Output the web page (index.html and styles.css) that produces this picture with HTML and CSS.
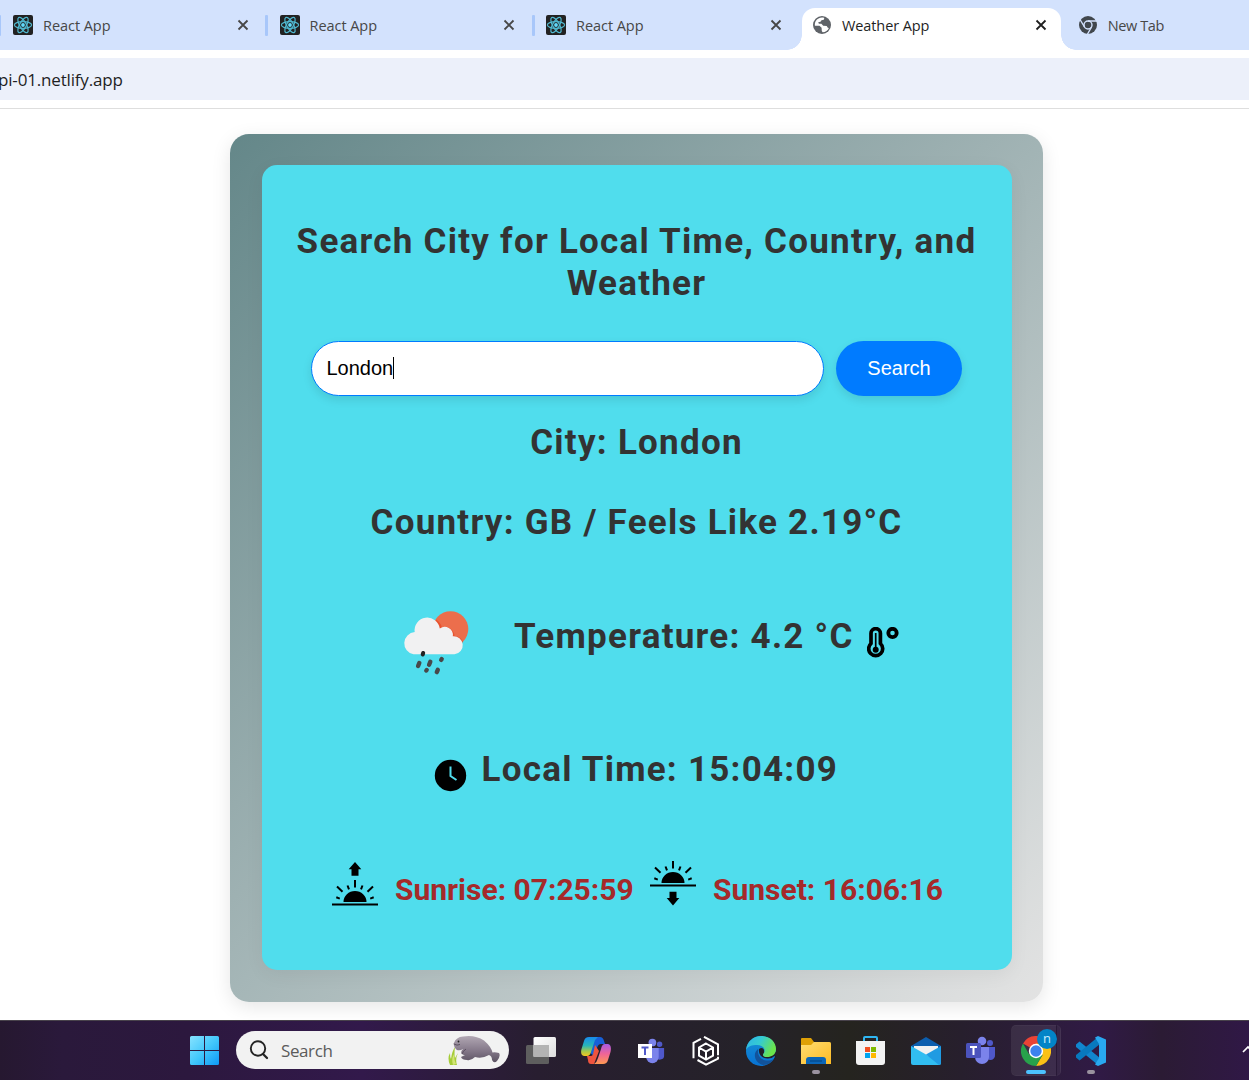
FILE: index.html
```html
<!DOCTYPE html>
<html lang="en">
<head>
<meta charset="utf-8">
<title>Weather App</title>
<link rel="stylesheet" href="styles.css">
</head>
<body>
<svg class="defs" width="0" height="0">
  <defs>
    <symbol id="react" viewBox="0 0 20 20">
      <rect width="20" height="20" rx="2" fill="#222222"/>
      <g fill="none" stroke="#50b9d0" stroke-width="1.2">
        <ellipse cx="10" cy="10" rx="8.6" ry="3.3"/>
        <ellipse cx="10" cy="10" rx="8.6" ry="3.3" transform="rotate(60 10 10)"/>
        <ellipse cx="10" cy="10" rx="8.6" ry="3.3" transform="rotate(120 10 10)"/>
      </g>
      <circle cx="10" cy="10" r="1.9" fill="#61dafb"/>
    </symbol>
    <symbol id="close" viewBox="0 0 12 12"><path d="M1.5 1.500l9 9M10.500 1.500l-9 9" stroke="currentColor" stroke-width="1.8"/></symbol>
    <symbol id="people" viewBox="0 0 30 30">
      <circle cx="24" cy="7" r="3" fill="#5059c9"/><path d="M20 11h9v8a4.500 4.500 0 0 1-9 1z" fill="#4f58ca"/>
      <circle cx="16" cy="5" r="4.300" fill="#7b83eb"/><path d="M9 11h14v10a7 7 0 0 1-14 0z" fill="#7b83eb"/>
    </symbol>
  </defs>
</svg>

<header class="tabs">
  <div class="tab"><svg class="favicon"><use href="#react"/></svg><span class="tab-title">React App</span><svg class="close"><use href="#close"/></svg></div>
  <div class="tab"><svg class="favicon"><use href="#react"/></svg><span class="tab-title">React App</span><svg class="close"><use href="#close"/></svg></div>
  <div class="tab"><svg class="favicon"><use href="#react"/></svg><span class="tab-title">React App</span><svg class="close"><use href="#close"/></svg></div>
  <div class="tab tab-active">
    <svg class="favicon" viewBox="0 0 20 20"><circle cx="10" cy="10" r="9" fill="#5f6368"/><path d="M12.300 2.900C9.500 1.800 5.500 3 3.800 6.100 3 7.600 2.700 9 2.900 10.700l4.600.1 2.100 1.900.2 3.200.8 1.300c3 0 5.300-1.800 6.300-4.300l-1.100-.1-1.100-1.800-3.500-.2-1.800-2.100H6.900L6.200 7.300l2.300-.6 1-1.500 2.300-.5z" fill="#fff"/></svg>
    <span class="tab-title title-weather">Weather App</span><svg class="close"><use href="#close"/></svg>
  </div>
  <div class="tab tab-new">
    <svg class="favicon" viewBox="0 0 20 20"><circle cx="10" cy="10" r="9" fill="#41474d"/><circle cx="10" cy="10" r="4" fill="none" stroke="#d3e2fd" stroke-width="1.400"/><path d="M10 6h9M6.500 12L2 4.500M13.500 12L9 20" stroke="#d3e2fd" stroke-width="1.400"/></svg>
    <span class="tab-title title-new">New Tab</span>
  </div>
</header>
<div class="toolbar"><div class="address">pi-01.netlify.app</div></div>

<main class="page">
  <section class="frame">
    <div class="panel">
      <h1 class="heading title">Search City for Local Time, Country, and<br>Weather</h1>
      <div class="search">
        <div class="city-input">London<span class="caret"></span></div>
        <button class="search-button">Search</button>
      </div>
      <h2 class="heading city">City: London</h2>
      <h2 class="heading country">Country: GB / Feels Like 2.19°C</h2>
      <div class="row temperature">
        <svg class="weather" viewBox="0 0 70 66">
          <circle cx="48.500" cy="19" r="17.800" fill="#ec6e4c"/>
          <path d="M34 9.500a13.500 13.500 0 0 1 6 8 9.500 9.500 0 0 1 12.500 8.500 10 10 0 0 1 8.500 6l-3 2-24-8z" fill="#e8532f"/>
          <path d="M11.500 44.300a11.200 11.200 0 0 1 1.200-22.200A12.300 12.300 0 0 1 37.800 18.500a8.200 8.200 0 0 1 13 7.700A9 9 0 1 1 52.500 44.300z" fill="#f1f1f2"/>
          <path d="M17.300 53l-1.200 3M28.300 51.700l-1.200 3M39.700 49.100l-.5.800M24.700 60l-.4.500M35.800 59.800l-1 2.300" stroke="#48484a" stroke-width="4.400" stroke-linecap="round"/>
          <path d="M21.200 43l-.5 1.500" stroke="#222" stroke-width="4" stroke-linecap="round"/>
        </svg>
        <h2 class="heading temp-text">Temperature: 4.2 °C</h2>
        <svg class="thermo" viewBox="0 0 32 32"><path d="M4 6.300a4.700 4.700 0 0 1 9.400 0v10.200a7 7 0 1 1-9.400 0z" fill="none" stroke="#000" stroke-width="3.700"/><path d="M8.700 6v17" stroke="#000" stroke-width="1.700"/><circle cx="8.700" cy="22.800" r="3" /><circle cx="25.500" cy="6" r="4.200" fill="none" stroke="#000" stroke-width="3.800"/></svg>
      </div>
      <div class="row time">
        <svg class="clock" viewBox="0 0 32 32"><circle cx="15.500" cy="15.500" r="15.700"/><path d="M15.500 6.500V16l6 4" fill="none" stroke="#50dded" stroke-width="2"/></svg>
        <h2 class="heading time-text">Local Time: 15:04:09</h2>
      </div>
      <div class="row sun">
        <svg class="sun-icon" viewBox="0 0 46 46"><path d="M23 0l6.300 7.300h-2.800v6.400h-7V7.300h-2.800zM11.500 40a11.500 11 0 0 1 23 0z"/><path d="M0 42.500h46M23 18v7.500M15.500 23.500l1.500 3.800M30.500 23.500L29 27.300M5 24.500l5.500 5.300M41 24.500l-5.500 5.300M4.300 35.300l3.500 1.300M41.700 35.300l-3.500 1.300" stroke="#000" stroke-width="2"/></svg>
        <strong class="sunrise-text">Sunrise: 07:25:59</strong>
        <svg class="sun-icon sunset-icon" viewBox="0 0 46 46"><path d="M23 44.500l6.300-7.500h-2.800v-6.300h-7V37h-2.800zM11.500 22a11.500 11 0 0 1 23 0z"/><path d="M0 24.500h46M23 0v7.500M15.500 5.500L17 9.300M30.500 5.500L29 9.300M5 6.500l5.500 5.300M41 6.500l-5.500 5.300M4.300 17.300l3.500 1.300M41.700 17.300l-3.500 1.300" stroke="#000" stroke-width="2"/></svg>
        <strong class="sunset-text">Sunset: 16:06:16</strong>
      </div>
    </div>
  </section>
</main>

<footer class="taskbar">
  <svg class="start" viewBox="0 0 30 30"><defs><linearGradient id="win" x2="1" y2="1" gradientUnits="userSpaceOnUse" x1="0" y1="0" gradientTransform="scale(30)"><stop stop-color="#87e3ff"/><stop offset=".5" stop-color="#42c7fb"/><stop offset="1" stop-color="#0a95f4"/></linearGradient></defs><path fill="url(#win)" d="M1.500 0H14v14H0V1.500Q0 0 1.500 0zM15 0h12.500Q29 0 29 1.500V14H15zM0 15h14v14H1.500Q0 29 0 27.500zM15 15h14v12.500q0 1.500-1.500 1.500H15z"/></svg>
  <div class="task-search">
    <svg class="lens" viewBox="0 0 20 20"><circle cx="9" cy="8.500" r="7.200" fill="none" stroke="#242424" stroke-width="1.900"/><path d="M14 14l4 4" stroke="#242424" stroke-width="2.300" stroke-linecap="round"/></svg>
    <span class="task-search-text">Search</span>
    <svg class="manatee" viewBox="0 0 52 32">
      <defs><linearGradient id="skin" x2="0" y2="1"><stop stop-color="#b1a7b3"/><stop offset=".55" stop-color="#85798a"/><stop offset="1" stop-color="#5c5363"/></linearGradient></defs>
      <path d="M2 30Q-1 23 2 18q0 4 1 6 1-8 4-12-1 8 0 11l3-5q-3 6-1 12z" fill="#a5cc37"/>
      <path d="M5 30q-2-6 1-11 0 6 2 10z" fill="#d2e574"/>
      <path d="M6 8Q8 2 15 1.500q12-2 21 4 7 6 8.500 12Q47 17 51 18q2 3-2 8-3 3-5-1 0-4-3-5-7 4-14 2-4 4-8 3-5 0-6-3 2-1 6-3-3 2-5 0-2-2 1-5-3 2-6 1-3-2-3.500-7z" fill="url(#skin)"/>
      <circle cx="10.500" cy="6.500" r=".9" fill="#222"/><path d="M6 9q3 2 6 .5M18 14q-3 2-4 5" stroke="#5b5060" fill="none"/>
    </svg>
  </div>
  <nav class="apps">
    <div class="app"><svg viewBox="0 0 30 30"><defs><linearGradient id="pane" x2="1" y2="1"><stop stop-color="#fff"/><stop offset="1" stop-color="#ddd"/></linearGradient></defs><rect y="9" width="23" height="19" rx="1.500" fill="#5e5e5e"/><rect x="7.500" y="1" width="22.500" height="20" rx="1.500" fill="url(#pane)"/><path d="M7.500 9H23v12H7.500z" fill="#b3b3b3"/></svg></div>
    <div class="app"><svg viewBox="0 0 30 30"><defs><linearGradient id="cp1" x2="0" y2="1"><stop stop-color="#188bed"/><stop offset=".45" stop-color="#28b5b8"/><stop offset=".75" stop-color="#a5c94b"/><stop offset="1" stop-color="#f4c61e"/></linearGradient><linearGradient id="cp2" x2="0" y2="1"><stop stop-color="#a75ae3"/><stop offset=".5" stop-color="#f06596"/><stop offset="1" stop-color="#ff9952"/></linearGradient></defs><path d="M12 1h7q3 0 4 4l1 3h-4q-3 0-4 4l-3 8-5-4z" fill="#1760d8"/><path d="M14 9l4 6-5 13H10q-3 0-3-4l-1-4h4q2 0 2.500-4z" fill="#ef543f"/><path d="M8 1h9q-3 2-4 6l-3 9q-1 4-4 4H3q-4-1-2.500-7L3 5Q4 1 8 1z" fill="url(#cp1)"/><path d="M22 28h-9q3-2 4-6l3-9q1-5 4-5h3q4 1 2.500 8L27 24q-1 4-5 4z" fill="url(#cp2)"/></svg></div>
    <div class="app"><svg viewBox="0 0 30 30"><g transform="translate(2 2) scale(.9)"><use href="#people" width="30" height="30"/></g><path d="M2 8h14v14H2z" fill="#fff"/><path d="M5.500 11.500h7M9 11.500v7.500" stroke="#5059c9" stroke-width="2"/></svg></div>
    <div class="app"><svg viewBox="0 0 30 30" fill="none" stroke="#fff" stroke-width="2"><path d="M13 .8l14 7.500v11M10 2.800L2.500 6.800v15.500M6.500 24l8.500 4.700 12-6v-2"/><path d="M15 7.500l7 4v8.200l-7 4-7-4v-8.200zM8 11.500l7 4 7-4M15 15.500v8"/></svg></div>
    <div class="app"><svg viewBox="0 0 30 30"><defs><linearGradient id="edge1" x2="1" y2=".4"><stop stop-color="#2eb3e8"/><stop offset=".5" stop-color="#35cbd2"/><stop offset="1" stop-color="#6be44b"/></linearGradient><linearGradient id="edge2" x2="0" y2="1"><stop stop-color="#1691d5"/><stop offset="1" stop-color="#0872d3"/></linearGradient></defs><circle cx="15" cy="15" r="15" fill="url(#edge2)"/><path d="M12 13c-6 5-3 14 5 16 5 0 9-3 11-6-8 4-17 0-16-9z" fill="#12539b"/><path d="M13 13c-1 6 4 10 9 9.500q4 0 6.500-2.500l2 3v-9q-3 7-10 7-5-1-2.500-4 1-4-2-5-2 0-3 1z" fill="#231f29"/><path d="M0 14C1 5 8 0 15 0c9 0 15 6 15 13 0 6-5 8-9 8-4 0-5-2-3-4 2-4-1-8-7-8-5 0-9 1-11 5z" fill="url(#edge1)"/></svg></div>
    <div class="app running"><svg viewBox="0 0 30 30"><defs><linearGradient id="folder" x2="1" y2="1"><stop stop-color="#ffdd72"/><stop offset="1" stop-color="#fdbb24"/></linearGradient></defs><path d="M0 3q0-1 1-1h9l3 4h15q2 0 2 2v10H0z" fill="#dea006"/><path d="M0 9h10l3-3h15q2 0 2 2v20H0z" fill="url(#folder)"/><path d="M5 28v-4q0-3 3-3h14q3 0 3 3v4z" fill="#0b66b7"/><path d="M9 25h12" stroke="#064e91" stroke-width="1.500"/></svg></div>
    <div class="app"><svg viewBox="0 0 30 30"><path d="M8 6V2Q8 1 9 1h11q1 0 1 1v4" fill="none" stroke="#2fb6f2" stroke-width="2"/><path d="M0 5h29v21q0 3-3 3H3q-3 0-3-3z" fill="#f3f3f3"/><path d="M9 11h5v5H9z" fill="#f25022"/><path d="M15 11h5v5h-5z" fill="#7fba00"/><path d="M9 17h5v5H9z" fill="#00a4ef"/><path d="M15 17h5v5h-5z" fill="#ffb900"/></svg></div>
    <div class="app"><svg viewBox="0 0 30 30"><path d="M0 10L15 1l15 9v10H0z" fill="#0c5eae"/><path d="M3 10h24v8L15 25 3 18z" fill="#f1f1f1"/><path d="M0 10l30 17q0 2-2 2H2q-2 0-2-2z" fill="#31bdf1"/><path d="M30 10v17q0 2-2 2L15 18.500z" fill="#209be2"/></svg></div>
    <div class="app"><svg viewBox="0 0 30 30"><use href="#people" width="30" height="30"/><rect y="7" width="15" height="15" rx="1.500" fill="#4b53bc"/><path d="M4 11h7M7.500 11v8" stroke="#fff" stroke-width="2"/></svg></div>
    <div class="app running current"><svg viewBox="0 0 30 30"><path d="M15 15L2 7.500A15 15 0 0 1 28 7.500z" fill="#ea4335"/><path d="M15 15V7.500h13A15 15 0 0 1 15 30l6.500-11z" fill="#fbc116"/><path d="M15 15l6.500 4L15 30A15 15 0 0 1 2 7.500L8.500 19z" fill="#28a24b"/><circle cx="15" cy="15" r="7.200" fill="#fff"/><circle cx="15" cy="15" r="5.700" fill="#3d82ed"/></svg><span class="badge">n</span></div>
    <div class="app running"><svg viewBox="0 0 30 30"><path d="M0 8.500l3.500-3L24 22l-2 7L0 11z" fill="#1186ce"/><path d="M0 21.500l3.500 3L24 8l-2-7L0 19z" fill="#0879be"/><path d="M22 0l8 3.500v23L22 30l-3-1.500L23 22V8l-4-6.500z" fill="#29a8ef"/></svg></div>
  </nav>
  <svg class="tray" viewBox="0 0 12 8"><path d="M1 7l5-5 5 5" fill="none" stroke="#fff" stroke-width="1.700"/></svg>
</footer>
</body>
</html>
```
FILE: styles.css
```css
*, *::before, *::after { box-sizing: border-box; }
body { margin: 0; width: 1249px; height: 1080px; overflow: hidden; background: #fff; display: flex; flex-direction: column; font-family: Roboto, sans-serif; }
svg { display: block; flex: none; }
.defs { position: absolute; }

.tabs { height: 50px; flex: none; background: #d3e2fd; display: flex; overflow: hidden; font: 14.5px/20px "Open Sans", sans-serif; color: #474747; }
.tab { width: 266.500px; flex: none; display: flex; align-items: center; padding: 0 16px 0 13px; height: 50px; position: relative; }
.tab::before { content: ""; position: absolute; left: -1.500px; top: 15px; width: 3px; height: 21px; border-radius: 1px; background: #a8c7fa; }
.tab:first-child::before { left: -2px; }
.favicon { width: 20px; height: 20px; margin-right: 10px; }
.tab-title { flex: 1; white-space: nowrap; letter-spacing: -.05px; padding-top: 2px; }
.title-weather { letter-spacing: -.1px; }
.title-new { letter-spacing: -.4px; }
.close { width: 12px; height: 12px; margin-right: 2px; }
.tab-active { width: 258.500px; margin: 8px 0 0 2.500px; height: 42px; background: #fff; border-radius: 13px 13px 0 0; color: #1f1f1f; padding: 0 12px 8px 10px; }
.tab-active::before, .tab-active::after { content: ""; position: absolute; left: -15px; top: auto; bottom: 0; width: 15px; height: 15px; border-radius: 0; background: radial-gradient(circle at 0 0, transparent 14.500px, #fff 15px); }
.tab-active::after { left: auto; right: -15px; background: radial-gradient(circle at 100% 0, transparent 14.500px, #fff 15px); }
.tab-new { padding-left: 17.300px; width: 189px; }
.tab-new::before { display: none; }

.toolbar { height: 59px; flex: none; padding-top: 8px; border-bottom: 1px solid #dedede; }
.address { height: 42px; background: #ecf0fa; font: 17px/43px "Open Sans", sans-serif; letter-spacing: -.17px; color: #1f1f1f; margin-left: -2px; }

.page { height: 911px; flex: none; padding: 25px 0 0 230px; overflow: hidden; }
.frame { width: 813px; height: 868px; padding: 31px 31px 32px 32px; border-radius: 19px; background: linear-gradient(135deg, #648789, #e3e3e3); box-shadow: 0 5px 19px rgba(0,0,0,.1); }
.panel { width: 750px; height: 805px; border-radius: 15px; background: #50dded; padding: 56px 1px 0 0; box-shadow: 0 5px 19px rgba(0,0,0,.05); display: flex; flex-direction: column; align-items: center; }
.heading { margin: 0; font-weight: 700; font-size: 35px; line-height: 42px; letter-spacing: 1.250px; color: #333; text-align: center; white-space: nowrap; }
.search { display: flex; gap: 12px; margin-top: 36px; margin-right: 1px; height: 55px; font: 20px "Liberation Sans", Arial, sans-serif; }
.city-input { width: 513px; border: 1px solid #007bff; border-radius: 28px; background: #fff; padding-left: 15px; display: flex; align-items: center; color: #000; box-shadow: 0 4px 10px rgba(0,0,0,.1); }
.caret { width: 1px; height: 22px; margin-bottom: 2px; background: #000; }
.search-button { width: 126px; border: 0; border-radius: 28px; background: #007bff; color: #fff; font: inherit; padding: 0 0 0 1px; box-shadow: 0 4px 10px rgba(0,0,0,.1); }
.city { margin-top: 26px; }
.country { margin-top: 38px; }
.row { display: flex; align-items: flex-start; width: 750px; flex: none; align-self: flex-start; }
.temperature { margin-top: 66px; height: 66px; padding-left: 140px; }
.weather { width: 70px; height: 66px; }
.temp-text { margin: 6px 0 0 42px; width: 353px; text-align: left; }
.thermo { width: 32px; height: 32px; margin-top: 17px; }
.time { margin-top: 73px; height: 45px; padding-left: 173px; }
.clock { width: 32px; height: 32px; margin-top: 11px; overflow: visible; }
.time-text { margin-left: 14.500px; }
.sun { margin-top: 67px; padding-left: 70px; color: #a52a2a; font-size: 30px; line-height: 36px; }
.sun-icon { width: 46px; height: 46px; margin-top: .5px; }
.sunset-icon { margin-top: -.5px; }
.sunrise-text, .sunset-text { font-weight: 700; margin: 11px 0 0 17px; white-space: nowrap; }
.sunrise-text { width: 255px; }

.taskbar { height: 60px; flex: none; border-top: 1px solid #48424b; background: linear-gradient(90deg, #261830 0, #2a193b 5%, #2c183e 15%, #32194b 29%, #281e30 43%, #252229 60%, #25241f 68%, #271f2d 77%, #301a45 88%, #2b1b34 93%, #301846 100%); display: flex; align-items: center; padding-left: 190px; overflow: hidden; }
.start { width: 30px; height: 30px; }
.task-search { width: 273px; height: 38px; flex: none; margin: 0 0 1px 16px; border-radius: 19px; background: #f2f2f2; display: flex; align-items: center; padding-left: 13px; font: 17px/24px "Open Sans", sans-serif; color: #5b5b5b; }
.lens { width: 20px; height: 20px; }
.task-search-text { width: 167px; margin-left: 12px; letter-spacing: -.4px; padding-top: 2px; }
.manatee { width: 52px; height: 32px; margin-top: 2px; }
.apps { display: flex; height: 59px; margin-left: 4.500px; }
.app { width: 55px; height: 59px; flex: none; position: relative; display: grid; place-items: center; }
.app > svg { width: 30px; height: 30px; position: relative; }
.running::after { content: ""; position: absolute; left: 23.500px; bottom: 6px; width: 8px; height: 4px; border-radius: 2px; background: #9a929f; }
.current::before { content: ""; position: absolute; left: 2.500px; top: 4px; width: 50px; height: 51px; border-radius: 5px; background: linear-gradient(90deg, rgba(255,255,255,.08) 44px, rgba(0,0,0,.1) 44px, rgba(0,0,0,.1) 45px, rgba(255,255,255,.05) 45px); border: 1px solid rgba(255,255,255,.03); }
.current::after { left: 17.500px; width: 20px; background: #4cc2ff; }
.badge { position: absolute; left: 28.500px; top: 8px; width: 20px; height: 20px; border-radius: 50%; background: #0284c7; color: #c6ecff; font: 13px/18px "Open Sans", sans-serif; text-align: center; }
.tray { width: 12px; height: 8px; margin: 0 0 3px 123px; }
```
